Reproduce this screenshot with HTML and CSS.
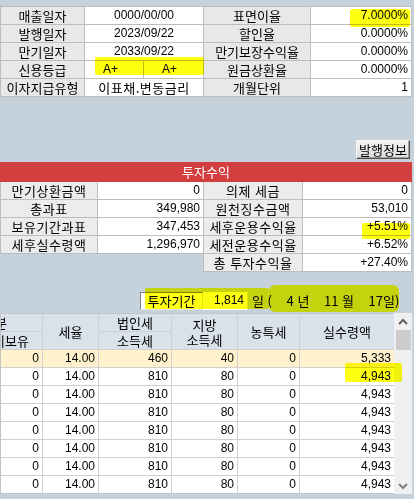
FILE: index.html
```html
<!DOCTYPE html>
<html lang="ko">
<head>
<meta charset="utf-8">
<link rel="stylesheet" href="styles.css">
</head>
<body>
<div class="page">
  <div class="info">
    <div class="lb">매출일자</div><div class="vl num ctr">0000/00/00</div>
    <div class="lb">표면이율</div><div class="vl num">7.0000%</div>
    <div class="lb">발행일자</div><div class="vl num ctr">2023/09/22</div>
    <div class="lb">할인율</div><div class="vl num">0.0000%</div>
    <div class="lb">만기일자</div><div class="vl num ctr">2033/09/22</div>
    <div class="lb">만기보장수익율</div><div class="vl num">0.0000%</div>
    <div class="lb">신용등급</div>
    <div class="split"><div class="sub num">A+</div><div class="sub num">A+</div></div>
    <div class="lb">원금상환율</div><div class="vl num">0.0000%</div>
    <div class="lb">이자지급유형</div><div class="vl kr ctr">이표채.변동금리</div>
    <div class="lb">개월단위</div><div class="vl num">1</div>
  </div>

  <div class="btnrow"><button class="btn">발행정보</button></div>

  <div class="bar">투자수익</div>

  <div class="profit">
    <div class="pleft">
      <div class="lb">만기상환금액</div><div class="vl num">0</div>
      <div class="lb">총과표</div><div class="vl num">349,980</div>
      <div class="lb">보유기간과표</div><div class="vl num">347,453</div>
      <div class="lb">세후실수령액</div><div class="vl num">1,296,970</div>
    </div>
    <div class="pright">
      <div class="lb">의제 세금</div><div class="vl num">0</div>
      <div class="lb">원천징수금액</div><div class="vl num">53,010</div>
      <div class="lb">세후운용수익율</div><div class="vl num">+5.51%</div>
      <div class="lb">세전운용수익율</div><div class="vl num">+6.52%</div>
      <div class="lb">총 투자수익율</div><div class="vl num">+27.40%</div>
    </div>
  </div>

  <div class="period">
    <div class="pbox plabel">투자기간</div>
    <div class="pbox pval num">1,814</div>
    <div class="ptext">일 (    4 년    11 월    17일)</div>
  </div>

  <div class="gridwrap">
    <div class="grid">
      <div class="hd h-c0r1"><span class="clip1">구분</span></div>
      <div class="hd h-c1">세율</div>
      <div class="hd h-c2r1">법인세</div>
      <div class="hd h-c3"><span class="two">지방<br>소득세</span></div>
      <div class="hd h-c4">농특세</div>
      <div class="hd h-c5">실수령액</div>
      <div class="hd h-c0r2"><span class="clip2">만기보유</span></div>
      <div class="hd h-c2r2">소득세</div>

      <div class="cell hl">0</div><div class="cell hl">14.00</div><div class="cell hl">460</div><div class="cell hl">40</div><div class="cell hl">0</div><div class="cell hl">5,333</div>
      <div class="cell">0</div><div class="cell">14.00</div><div class="cell">810</div><div class="cell">80</div><div class="cell">0</div><div class="cell">4,943</div>
      <div class="cell">0</div><div class="cell">14.00</div><div class="cell">810</div><div class="cell">80</div><div class="cell">0</div><div class="cell">4,943</div>
      <div class="cell">0</div><div class="cell">14.00</div><div class="cell">810</div><div class="cell">80</div><div class="cell">0</div><div class="cell">4,943</div>
      <div class="cell">0</div><div class="cell">14.00</div><div class="cell">810</div><div class="cell">80</div><div class="cell">0</div><div class="cell">4,943</div>
      <div class="cell">0</div><div class="cell">14.00</div><div class="cell">810</div><div class="cell">80</div><div class="cell">0</div><div class="cell">4,943</div>
      <div class="cell">0</div><div class="cell">14.00</div><div class="cell">810</div><div class="cell">80</div><div class="cell">0</div><div class="cell">4,943</div>
      <div class="cell">0</div><div class="cell">14.00</div><div class="cell">810</div><div class="cell">80</div><div class="cell">0</div><div class="cell">4,943</div>
    </div>
    <div class="scroll">
      <div class="arrow">
        <svg width="12" height="8" viewBox="0 0 12 8"><path d="M2 6 L6 2 L10 6" fill="none" stroke="#606060" stroke-width="2"/></svg>
      </div>
      <div class="thumb"></div>
      <div class="track"></div>
      <div class="arrow">
        <svg width="12" height="8" viewBox="0 0 12 8"><path d="M2 2 L6 6 L10 2" fill="none" stroke="#808080" stroke-width="2"/></svg>
      </div>
    </div>
  </div>

  <div class="mark m1"></div>
  <div class="mark m2"></div>
  <div class="mark m3"></div>
  <div class="mark m4"></div>
  <div class="mark m5"></div>
  <div class="mark m6"></div>
</div>
</body>
</html>
```

FILE: styles.css
```css
html, body {
  margin: 0;
  padding: 0;
}
body {
  background: #c5d2dc;
  font-family: "Liberation Sans", "Noto Sans CJK KR", sans-serif;
  color: #000;
}
.page {
  position: relative;
  width: 414px;
  height: 499px;
  overflow: hidden;
  padding-top: 6px;
  box-sizing: border-box;
  background: #c5d2dc;
  isolation: isolate;
}

/* top info table */
.info {
  width: 412px;
  box-sizing: border-box;
  display: grid;
  grid-template-columns: 83px 118px 106px 100px;
  grid-auto-rows: 17px;
  gap: 1px;
  background: #bdbdbd;
  border: 1px solid #bdbdbd;
}
.lb {
  background: #e8e8e8;
  text-align: center;
  font-family: "Noto Sans CJK KR", sans-serif;
  font-size: 13px;
  line-height: 17px;
  white-space: nowrap;
  overflow: hidden;
}
.vl {
  background: #fff;
  text-align: right;
  padding-right: 3px;
  line-height: 17px;
  white-space: nowrap;
  overflow: hidden;
}
.ctr {
  text-align: center;
  padding-right: 0;
}
.num {
  font-family: "Liberation Sans", "Noto Sans CJK KR", sans-serif;
  font-size: 12px;
}
.kr {
  font-family: "Noto Sans CJK KR", sans-serif;
  font-size: 13px;
  letter-spacing: 0.5px;
}
.split {
  display: grid;
  grid-template-columns: 58px 59px;
  gap: 1px;
  background: #bdbdbd;
}
.sub {
  background: #fff;
  line-height: 17px;
  padding-left: 18px;
}

/* button */
.btnrow {
  display: flex;
  justify-content: flex-end;
  padding-right: 4px;
  margin-top: 43px;
  height: 19px;
}
.btn {
  width: 54px;
  height: 19px;
  padding: 0;
  margin: 0;
  font-family: "Noto Sans CJK KR", sans-serif;
  font-size: 13px;
  line-height: 15px;
  color: #000;
  background: linear-gradient(#f4f4f4, #dcdcdc);
  border: 1px solid;
  border-color: #f8f8f8 #505050 #505050 #f8f8f8;
  box-shadow: inset -1px -1px 0 #a0a0a0;
}

/* red bar */
.bar {
  margin-top: 3px;
  width: 412px;
  height: 20px;
  background: #d33e3f;
  color: #fff;
  text-align: center;
  font-family: "Noto Sans CJK KR", sans-serif;
  font-size: 13px;
  line-height: 20px;
}

/* profit tables */
.profit {
  display: flex;
  align-items: flex-start;
}
.pleft {
  display: grid;
  grid-template-columns: 96px 105px;
  grid-auto-rows: 17px;
  gap: 1px;
  background: #bdbdbd;
  padding: 0 0 1px 1px;
}
.pright {
  display: grid;
  grid-template-columns: 98px 108px;
  grid-auto-rows: 17px;
  gap: 1px;
  background: #bdbdbd;
  padding: 0 1px 1px 1px;
}
.pleft .lb, .pright .lb {
  background: #ececec;
  letter-spacing: 0.5px;
}

/* period line */
.period {
  display: flex;
  align-items: center;
  margin-top: 20px;
  margin-left: 140px;
  height: 18px;
}
.pbox {
  height: 18px;
  box-sizing: border-box;
  background: #fff;
  border: 1px solid;
  border-color: #808080 #e4e4e4 #e4e4e4 #808080;
  line-height: 16px;
}
.plabel {
  width: 63px;
  font-family: "Noto Sans CJK KR", sans-serif;
  font-size: 13px;
  text-align: center;
}
.pval {
  width: 45px;
  text-align: right;
  padding-right: 3px;
  border-left: none;
  border-top: none;
  border-bottom: none;
}
.ptext {
  white-space: pre;
  font-family: "Noto Sans CJK KR", sans-serif;
  font-size: 13px;
  line-height: 18px;
  margin-left: 4px;
}

/* data grid */
.gridwrap {
  display: flex;
  margin-top: 3px;
  width: 412px;
}
.grid {
  width: 394px;
  box-sizing: border-box;
  display: grid;
  grid-template-columns: 41px 55px 72px 65px 61px 94px;
  grid-template-rows: 17px 17px repeat(8, 17px);
  gap: 1px;
  background: #d0d0d0;
  border: 1px solid #c4c4c4;
  border-right: none;
}
.hd {
  background: #d9e2ea;
  font-family: "Noto Sans CJK KR", sans-serif;
  font-size: 13px;
  line-height: 17px;
  text-align: center;
  overflow: hidden;
  white-space: nowrap;
  display: flex;
  align-items: center;
  justify-content: center;
}
.h-c0r1 { grid-column: 1; grid-row: 1; justify-content: flex-start; }
.h-c0r2 { grid-column: 1; grid-row: 2; justify-content: flex-start; }
.h-c1 { grid-column: 2; grid-row: 1 / span 2; }
.h-c2r1 { grid-column: 3; grid-row: 1; }
.h-c2r2 { grid-column: 3; grid-row: 2; }
.h-c3 { grid-column: 4; grid-row: 1 / span 2; }
.h-c4 { grid-column: 5; grid-row: 1 / span 2; }
.h-c5 { grid-column: 6; grid-row: 1 / span 2; }
.two { line-height: 15px; }
.clip1 { margin-left: -18px; flex: none; }
.clip2 { margin-left: -20px; flex: none; }
.cell {
  background: #fff;
  text-align: right;
  padding-right: 3px;
  font-size: 12px;
  line-height: 17px;
  white-space: nowrap;
}
.cell.hl {
  background: #fff2cc;
}

/* scrollbar */
.scroll {
  width: 18px;
  height: 181px;
  background: #f0f0f0;
  display: flex;
  flex-direction: column;
  align-items: center;
}
.arrow {
  height: 17px;
  width: 18px;
  display: flex;
  align-items: center;
  justify-content: center;
}
.thumb {
  width: 15px;
  height: 20px;
  background: #cdcdcd;
}
.track {
  flex: 1;
}

/* highlighter marks */
.mark {
  position: absolute;
  background: #ffff10;
  mix-blend-mode: multiply;
  border-radius: 2px;
}
.m1 { left: 350px; top: 9px; width: 60px; height: 18px; }
.m2 { left: 95px; top: 57px; width: 109px; height: 18px; }
.m3 { left: 362px; top: 223px; width: 48px; height: 16px; }
.m4 { left: 145px; top: 288px; width: 124px; height: 21px; }
.m5 { left: 269px; top: 285px; width: 130px; height: 27px; border-radius: 6px; }
.m6 { left: 345px; top: 363px; width: 57px; height: 19px; }
```
